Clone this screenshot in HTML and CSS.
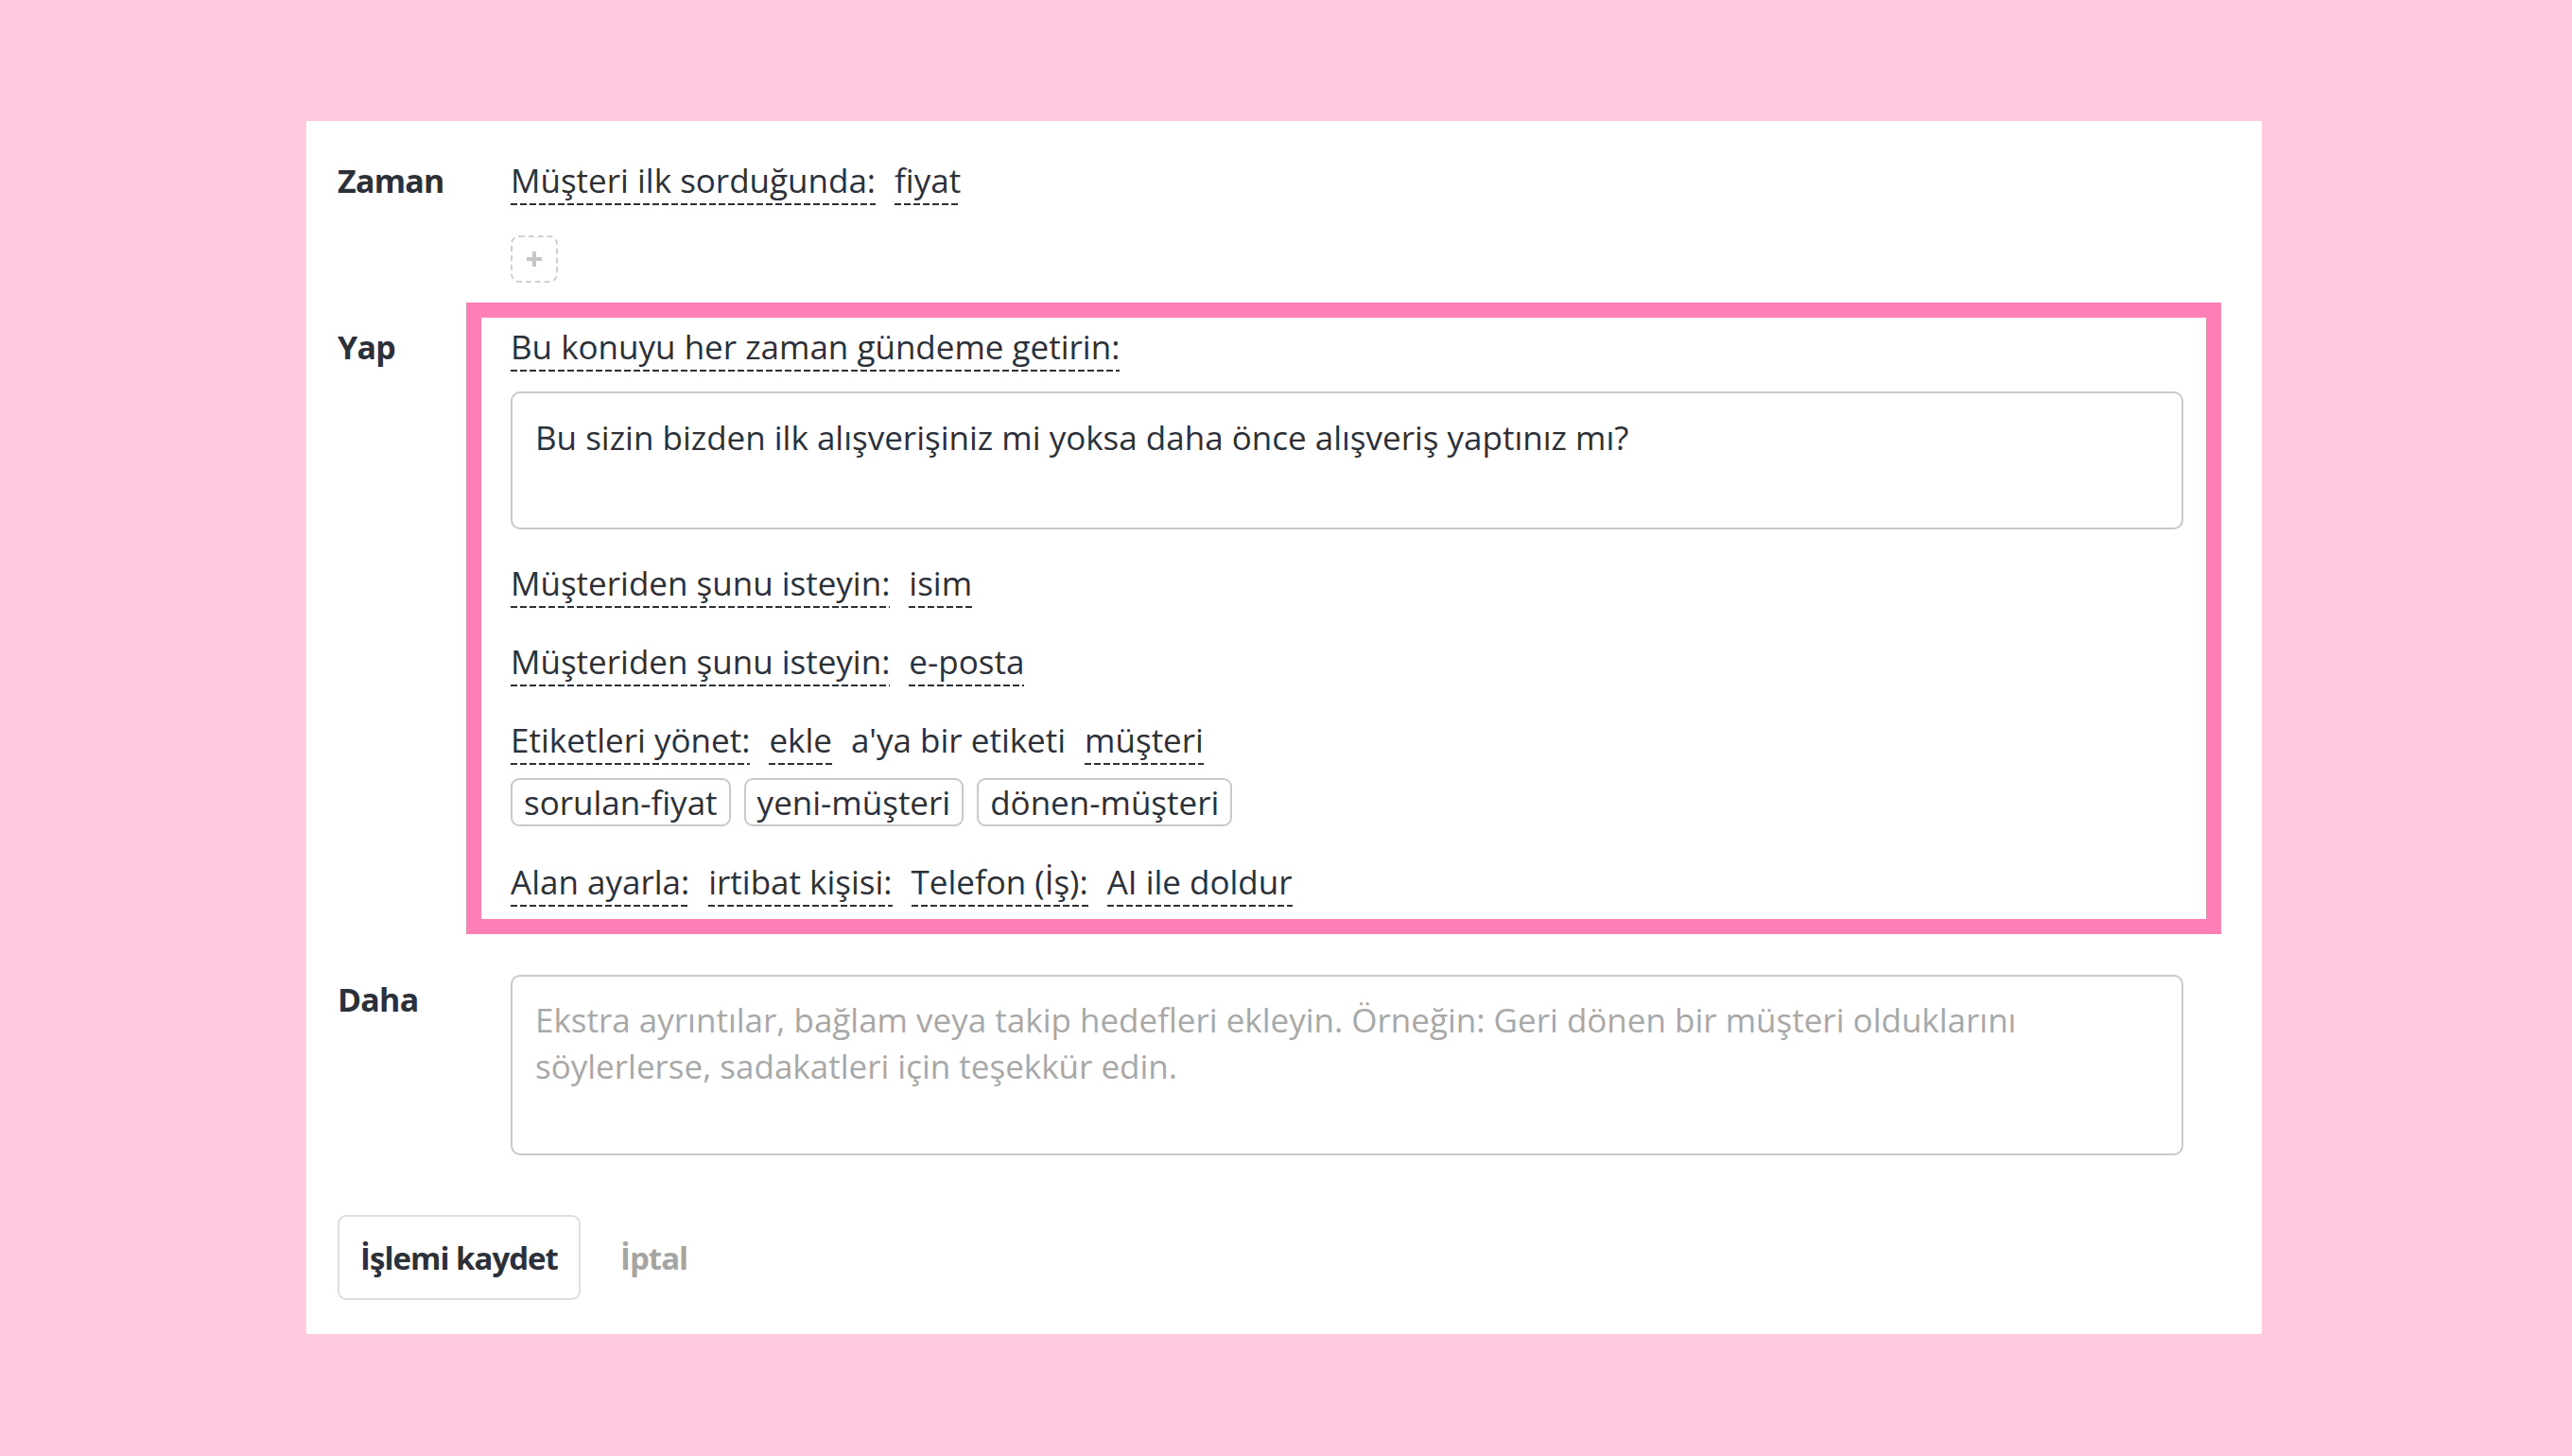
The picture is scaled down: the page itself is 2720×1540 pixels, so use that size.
FILE: index.html
```html
<!DOCTYPE html>
<html lang="tr">
<head>
<meta charset="utf-8">
<title>İşlem düzenle</title>
<link rel="stylesheet" href="styles.css">
</head>
<body>
<div class="card">
  <div class="row row-zaman">
    <div class="label">Zaman</div>
    <div class="content">
      <div class="line">
        <span class="token">Müşteri ilk sorduğunda:</span>
        <span class="token">fiyat</span>
      </div>
      <button class="add" type="button" aria-label="Ekle">
        <svg width="20" height="20" viewBox="0 0 20 20"><path d="M10 2v16M2 10h16" stroke="#c6c6c6" stroke-width="4" fill="none"/></svg>
      </button>
    </div>
  </div>

  <div class="row row-yap">
    <div class="label label-yap">Yap</div>
    <div class="content highlight">
      <div class="line">
        <span class="token">Bu konuyu her zaman gündeme getirin:</span>
      </div>
      <textarea class="field field-topic" rows="2">Bu sizin bizden ilk alışverişiniz mi yoksa daha önce alışveriş yaptınız mı?</textarea>
      <div class="line line-gap">
        <span class="token">Müşteriden şunu isteyin:</span>
        <span class="token">isim</span>
      </div>
      <div class="line line-gap">
        <span class="token">Müşteriden şunu isteyin:</span>
        <span class="token">e-posta</span>
      </div>
      <div class="line line-gap">
        <span class="token">Etiketleri yönet:</span>
        <span class="token">ekle</span>
        <span class="plain">a'ya bir etiketi</span>
        <span class="token">müşteri</span>
      </div>
      <div class="chips">
        <span class="chip">sorulan-fiyat</span>
        <span class="chip">yeni-müşteri</span>
        <span class="chip">dönen-müşteri</span>
      </div>
      <div class="line line-alan">
        <span class="token">Alan ayarla:</span>
        <span class="token">irtibat kişisi:</span>
        <span class="token">Telefon (İş):</span>
        <span class="token">AI ile doldur</span>
      </div>
    </div>
  </div>

  <div class="row row-daha">
    <div class="label label-daha">Daha</div>
    <div class="content">
      <textarea class="field field-more" rows="3" placeholder="Ekstra ayrıntılar, bağlam veya takip hedefleri ekleyin. Örneğin: Geri dönen bir müşteri olduklarını söylerlerse, sadakatleri için teşekkür edin."></textarea>
    </div>
  </div>

  <div class="actions">
    <button class="btn-save" type="button">İşlemi kaydet</button>
    <button class="btn-cancel" type="button">İptal</button>
  </div>
</div>
</body>
</html>
```

FILE: styles.css
```css
* { box-sizing: border-box; }

html, body {
  margin: 0;
  padding: 0;
}

body {
  background: #ffc9df;
  font-family: "Open Sans", "Noto Sans", "Liberation Sans", sans-serif;
  font-size: 35px;
  color: #2c3039;
  padding: 128px 0 0 324px;
  min-height: 1540px;
}

.card {
  width: 2068px;
  background: #ffffff;
  padding: 39px 83px 36px 33px;
}

.row {
  display: grid;
  grid-template-columns: 183px 1fr;
}

.label {
  font-weight: 700;
  font-size: 34px;
  line-height: 48px;
  letter-spacing: -0.8px;
}

.content {
  display: flex;
  flex-direction: column;
  align-items: flex-start;
}

.line {
  display: flex;
  align-items: flex-start;
  gap: 20px;
  line-height: 48px;
  white-space: nowrap;
}

.token {
  display: inline-block;
  line-height: 48px;
  padding-bottom: 2px;
  background-image: repeating-linear-gradient(to right, #2c3039 0 7px, transparent 7px 10px);
  background-size: 100% 2px;
  background-position: left bottom;
  background-repeat: no-repeat;
}

.plain {
  line-height: 48px;
}

.add {
  margin-top: 32px;
  width: 50px;
  height: 50px;
  border: 2px dashed #cfcfcf;
  border-radius: 9px;
  background: #fff;
  padding: 0;
  display: flex;
  align-items: center;
  justify-content: center;
}

.row-yap {
  margin-top: 21px;
}

.label-yap {
  padding-top: 23px;
}

.highlight {
  border: 16px solid #ff7eb6;
  margin: 0 -40px 0 -47px;
  padding: 7px 24px 13px 31px;
  align-items: stretch;
}

.highlight .line {
  align-self: flex-start;
}

.field {
  display: block;
  width: 100%;
  font: inherit;
  color: inherit;
  line-height: 49px;
  border: 2px solid #c9c9c9;
  border-radius: 10px;
  padding: 22px 24px;
  resize: none;
  background: #fff;
  outline: none;
}

.field-topic {
  margin-top: 21px;
  height: 146px;
}

.line-gap {
  margin-top: 33px;
}

.chips {
  display: flex;
  gap: 14px;
  margin-top: 14px;
}

.chip {
  display: inline-block;
  height: 51px;
  line-height: 47px;
  padding: 0 12px;
  border: 2px solid #c9c9c9;
  border-radius: 9px;
}

.line-alan {
  margin-top: 35px;
}

.row-daha {
  margin-top: 43px;
}

.label-daha {
  padding-top: 2px;
}

.field-more {
  height: 191px;
  padding-top: 21px;
}

.field-more::placeholder {
  color: #a8a8a8;
  opacity: 1;
}

.actions {
  margin-top: 63px;
  display: flex;
  align-items: center;
  gap: 42px;
}

.btn-save {
  font: inherit;
  font-size: 33px;
  font-weight: 700;
  letter-spacing: -1px;
  color: #2c3039;
  height: 90px;
  width: 257px;
  background: #fff;
  border: 2px solid #dedede;
  border-radius: 9px;
  padding: 0;
}

.btn-cancel {
  font: inherit;
  font-size: 33px;
  font-weight: 700;
  letter-spacing: -1px;
  color: #a4a4a4;
  background: none;
  border: 0;
  padding: 0;
}
```
